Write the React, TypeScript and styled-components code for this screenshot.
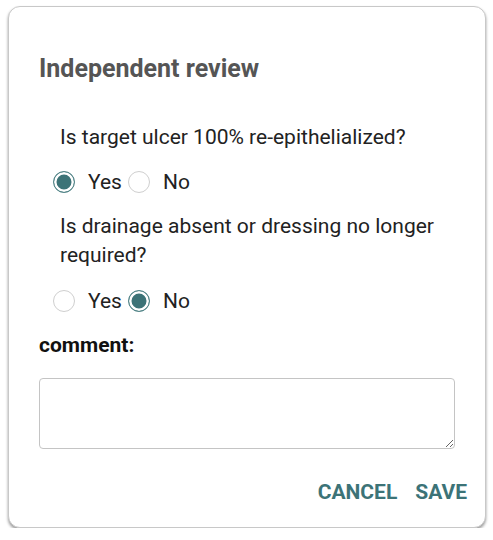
import React, { useState } from 'react'
import styled, { createGlobalStyle } from 'styled-components'

const GlobalStyle = createGlobalStyle`
  html, body {
    margin: 0;
    padding: 0;
    background: #ffffff;
  }
  body {
    font-family: Roboto, "Liberation Sans", Arial, sans-serif;
  }
`

const TEAL = '#3c7377'

const Dialog = styled.div`
  box-sizing: border-box;
  margin: 6px 0 0 8px;
  width: 478px;
  height: 522px;
  border: 1px solid #c8c8c8;
  border-radius: 12px;
  box-shadow: 0 2px 3px rgba(0, 0, 0, 0.4);
  background: #fff;
  padding: 47px 30px 0 30px;
  display: flex;
  flex-direction: column;
`

const Title = styled.h2`
  margin: 0;
  font-size: 25px;
  line-height: 29px;
  font-weight: 700;
  color: #555555;
`

const Question = styled.p<{ $gap: number }>`
  margin: ${({ $gap }) => $gap}px 0 0 21px;
  font-size: 21px;
  line-height: 29px;
  color: #222222;
`

const RadioRow = styled.div<{ $gap: number }>`
  margin: ${({ $gap }) => $gap}px 0 0 14px;
  height: 30px;
  display: flex;
  align-items: center;
`

const Option = styled.label`
  display: flex;
  align-items: center;
  gap: 13px;
  margin-right: 6px;
  font-size: 21px;
  color: #222222;
  cursor: pointer;
`

const Circle = styled.span<{ $checked: boolean }>`
  box-sizing: border-box;
  width: 22px;
  height: 22px;
  border-radius: 50%;
  border: 1px solid ${({ $checked }) => ($checked ? '#55878a' : '#cfcfcf')};
  background: ${({ $checked }) => ($checked ? TEAL : '#fff')};
  box-shadow: ${({ $checked }) => ($checked ? 'inset 0 0 0 2.5px #fff' : 'none')};
`

const Label = styled.div`
  margin-top: 17px;
  font-size: 21px;
  line-height: 24px;
  font-weight: 700;
  color: #111111;
`

const Comment = styled.textarea`
  box-sizing: border-box;
  margin-top: 21px;
  width: 416px;
  height: 71px;
  border: 1px solid #c4c4c4;
  border-radius: 4px;
  padding: 8px;
  font-family: inherit;
  font-size: 16px;
  resize: vertical;
  outline: none;
`

const Actions = styled.div`
  margin: 31px -12px 0 0;
  display: flex;
  justify-content: flex-end;
  gap: 18px;
`

const TextButton = styled.button`
  border: none;
  background: none;
  padding: 0;
  font-family: inherit;
  font-size: 21px;
  line-height: 24px;
  font-weight: 700;
  color: ${TEAL};
  cursor: pointer;
`

interface YesNoProps {
  value: boolean
  gap: number
  onChange: (v: boolean) => void
}

function YesNo({ value, gap, onChange }: YesNoProps) {
  return (
    <RadioRow $gap={gap}>
      <Option onClick={() => onChange(true)}>
        <Circle $checked={value} />
        Yes
      </Option>
      <Option onClick={() => onChange(false)}>
        <Circle $checked={!value} />
        No
      </Option>
    </RadioRow>
  )
}

export default function App() {
  const [healed, setHealed] = useState(true)
  const [drainage, setDrainage] = useState(false)
  const [comment, setComment] = useState('')

  return (
    <>
      <GlobalStyle />
      <Dialog>
        <Title>Independent review</Title>
        <Question $gap={40}>Is target ulcer 100% re-epithelialized?</Question>
        <YesNo value={healed} gap={15} onChange={setHealed} />
        <Question $gap={15}>Is drainage absent or dressing no longer required?</Question>
        <YesNo value={drainage} gap={16} onChange={setDrainage} />
        <Label>comment:</Label>
        <Comment value={comment} onChange={e => setComment(e.target.value)} />
        <Actions>
          <TextButton>CANCEL</TextButton>
          <TextButton>SAVE</TextButton>
        </Actions>
      </Dialog>
    </>
  )
}
